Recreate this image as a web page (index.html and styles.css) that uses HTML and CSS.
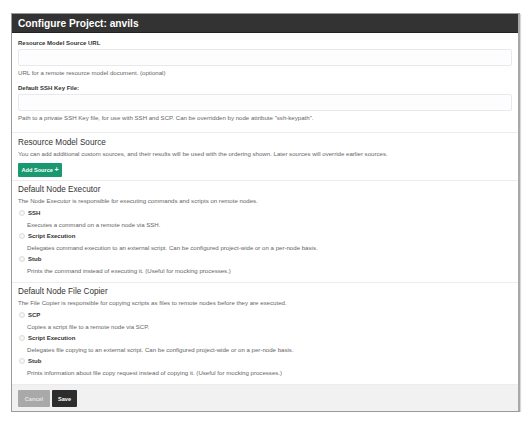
FILE: index.html
```html
<!DOCTYPE html>
<html>
<head>
<meta charset="utf-8">
<link rel="stylesheet" href="styles.css">
</head>
<body>
<div class="panel">
  <div class="panel-head">Configure Project: anvils</div>
  <div class="section first">
    <div class="label">Resource Model Source URL</div>
    <div class="input"></div>
    <div class="help">URL for a remote resource model document. (optional)</div>
    <div class="label second">Default SSH Key File:</div>
    <div class="input"></div>
    <div class="help">Path to a private SSH Key file, for use with SSH and SCP. Can be overridden by node attribute "ssh-keypath".</div>
  </div>
  <div class="section sources">
    <div class="heading">Resource Model Source</div>
    <div class="help">You can add additional custom sources, and their results will be used with the ordering shown. Later sources will override earlier sources.</div>
    <button class="btn-add">Add Source <span class="plus">+</span></button>
  </div>
  <div class="section">
    <div class="heading">Default Node Executor</div>
    <div class="help">The Node Executor is responsible for executing commands and scripts on remote nodes.</div>
    <div class="options">
      <div class="option">
        <div class="opt-row"><span class="radio"></span><span class="opt-name">SSH</span></div>
        <div class="opt-desc">Executes a command on a remote node via SSH.</div>
      </div>
      <div class="option">
        <div class="opt-row"><span class="radio"></span><span class="opt-name">Script Execution</span></div>
        <div class="opt-desc">Delegates command execution to an external script. Can be configured project-wide or on a per-node basis.</div>
      </div>
      <div class="option">
        <div class="opt-row"><span class="radio"></span><span class="opt-name">Stub</span></div>
        <div class="opt-desc">Prints the command instead of executing it. (Useful for mocking processes.)</div>
      </div>
    </div>
  </div>
  <div class="section">
    <div class="heading">Default Node File Copier</div>
    <div class="help">The File Copier is responsible for copying scripts as files to remote nodes before they are executed.</div>
    <div class="options">
      <div class="option">
        <div class="opt-row"><span class="radio"></span><span class="opt-name">SCP</span></div>
        <div class="opt-desc">Copies a script file to a remote node via SCP.</div>
      </div>
      <div class="option">
        <div class="opt-row"><span class="radio"></span><span class="opt-name">Script Execution</span></div>
        <div class="opt-desc">Delegates file copying to an external script. Can be configured project-wide or on a per-node basis.</div>
      </div>
      <div class="option">
        <div class="opt-row"><span class="radio"></span><span class="opt-name">Stub</span></div>
        <div class="opt-desc">Prints information about file copy request instead of copying it. (Useful for mocking processes.)</div>
      </div>
    </div>
  </div>
  <div class="panel-foot">
    <button class="btn btn-cancel">Cancel</button>
    <button class="btn btn-save">Save</button>
  </div>
</div>
</body>
</html>
```
FILE: styles.css
```css
html, body {
  margin: 0;
  padding: 0;
  background: #ffffff;
}
body {
  font-family: "Liberation Sans", Arial, sans-serif;
  color: #333;
}
.panel {
  margin: 13px 0 0 11px;
  width: 506px;
  border: 1px solid #9a9a9a;
  border-right: 2px solid #a8a8a8;
  box-shadow: 1px 1px 1px rgba(0,0,0,0.15);
  background: #fff;
}
.panel-head {
  background: #333333;
  color: #fff;
  font-weight: bold;
  font-size: 10.2px;
  height: 19px;
  line-height: 19px;
  padding-left: 6px;
  border-bottom: 1px solid #222;
  box-sizing: border-box;
}
.section {
  padding: 4px 6px 3px 6px;
  border-bottom: 1px solid #ececec;
  display: flex;
  flex-direction: column;
}
.section.first {
  padding-top: 6px;
  padding-bottom: 10px;
}
.section.sources {
  padding-top: 5px;
}
.label {
  font-size: 6px;
  font-weight: bold;
  line-height: 8px;
  color: #333;
}
.label.second {
  margin-top: 7px;
}
.input {
  margin-top: 2px;
  height: 17px;
  box-sizing: border-box;
  border: 1px solid #e8e8ee;
  border-radius: 2px;
  background: #fdfdfd;
}
.help {
  font-size: 6.1px;
  line-height: 8px;
  color: #666;
  margin-top: 3px;
}
.heading {
  font-size: 8.2px;
  line-height: 10px;
  color: #333;
}
.heading + .help {
  margin-top: 2px;
}
.btn-add {
  align-self: flex-start;
  margin-top: 5px;
  height: 14px;
  width: 44px;
  padding: 0;
  border: none;
  border-radius: 1px;
  background: #1a9870;
  color: #fff;
  font-family: "Liberation Sans", Arial, sans-serif;
  font-size: 5.6px;
  font-weight: bold;
  line-height: 14px;
}
.plus {
  font-size: 7px;
}
.options {
  display: flex;
  flex-direction: column;
  gap: 3px;
  margin-top: 4px;
  padding-bottom: 4px;
}
.option {
  display: flex;
  flex-direction: column;
  gap: 4px;
}
.opt-row {
  display: flex;
  align-items: center;
  height: 8px;
}
.radio {
  width: 4px;
  height: 4px;
  border: 1px solid #dcdcdc;
  border-radius: 50%;
  background: #f6f6f6;
  margin-left: 1px;
  margin-right: 3px;
}
.opt-name {
  font-size: 6px;
  font-weight: bold;
  line-height: 8px;
  color: #333;
}
.opt-desc {
  font-size: 6.1px;
  line-height: 8px;
  color: #666;
  padding-left: 9px;
}
.panel-foot {
  background: #f1f1f1;
  padding: 5px 6px 4px 6px;
  display: flex;
  gap: 2px;
}
.btn {
  height: 17px;
  border: none;
  padding: 0;
  font-family: "Liberation Sans", Arial, sans-serif;
  font-size: 5.6px;
  font-weight: bold;
  border-radius: 1px;
}
.btn-cancel {
  width: 32px;
  background: #a9a9a9;
  color: #e4e4e4;
}
.btn-save {
  width: 25px;
  background: #2d2d2d;
  color: #fff;
}
```
